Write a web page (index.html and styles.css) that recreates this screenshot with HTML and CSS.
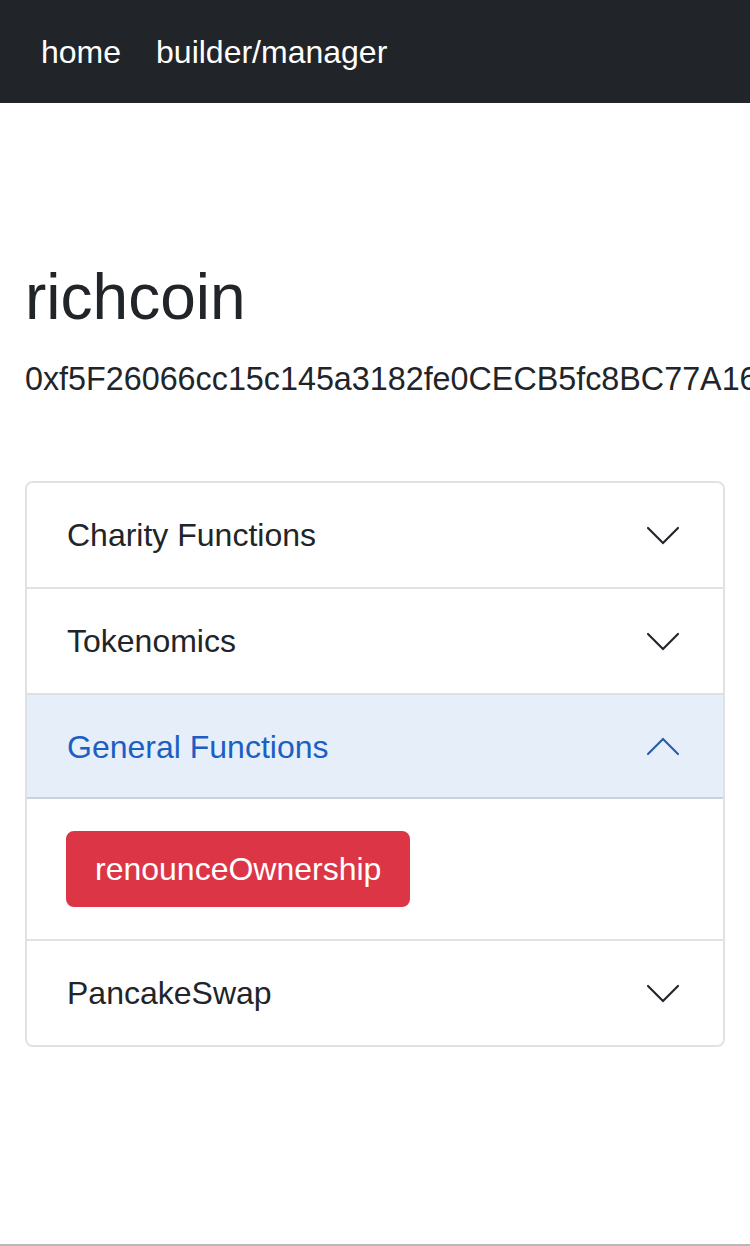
FILE: index.html
```html
<!DOCTYPE html>
<html lang="en">
<head>
<meta charset="utf-8">
<title>richcoin</title>
<link rel="stylesheet" href="styles.css">
</head>
<body>
<div class="page">
  <nav class="navbar">
    <a class="nav-link" href="#">home</a>
    <a class="nav-link" href="#">builder/manager</a>
  </nav>
  <main class="container">
    <h1 class="title">richcoin</h1>
    <p class="address">0xf5F26066cc15c145a3182fe0CECB5fc8BC77A16</p>
    <div class="accordion">
      <div class="acc-item">
        <button class="acc-btn">
          <span>Charity Functions</span>
          <svg class="chev" viewBox="0 0 16 16"><path d="M2 5.2L8 11.2L14 5.2"/></svg>
        </button>
      </div>
      <div class="acc-item">
        <button class="acc-btn">
          <span>Tokenomics</span>
          <svg class="chev" viewBox="0 0 16 16"><path d="M2 5.2L8 11.2L14 5.2"/></svg>
        </button>
      </div>
      <div class="acc-item">
        <button class="acc-btn active">
          <span>General Functions</span>
          <svg class="chev up" viewBox="0 0 16 16"><path d="M2 5.2L8 11.2L14 5.2"/></svg>
        </button>
        <div class="acc-body">
          <button class="btn-danger">renounceOwnership</button>
        </div>
      </div>
      <div class="acc-item">
        <button class="acc-btn">
          <span>PancakeSwap</span>
          <svg class="chev" viewBox="0 0 16 16"><path d="M2 5.2L8 11.2L14 5.2"/></svg>
        </button>
      </div>
    </div>
  </main>
</div>
</body>
</html>
```
FILE: styles.css
```css
* { box-sizing: border-box; }
html, body {
  margin: 0;
  padding: 0;
  overflow: hidden;
}
body {
  font-family: "Liberation Sans", Arial, sans-serif;
  font-size: 32px;
  line-height: 1.5;
  color: #212529;
  background: #fff;
}
.page {
  min-height: 100vh;
  border-bottom: 2px solid #b8b8b8;
}
.navbar {
  background: #212529;
  height: 103px;
  display: flex;
  align-items: center;
  gap: 35px;
  padding: 0 41px;
}
.nav-link {
  color: #fff;
  text-decoration: none;
  font-size: 32px;
  line-height: 48px;
}
.container {
  padding: 0 25px;
}
.title {
  margin: 156px 0 19px;
  font-size: 64px;
  font-weight: 400;
  line-height: 1.2;
}
.address {
  margin: 0 0 78px;
  white-space: nowrap;
  line-height: 48px;
  font-size: 32.3px;
}
.accordion {
  border: 2px solid #dfe1e4;
  border-radius: 8px;
  overflow: hidden;
}
.acc-item + .acc-item {
  border-top: 2px solid #dfe1e4;
}
.acc-btn {
  display: flex;
  align-items: center;
  justify-content: space-between;
  width: 100%;
  border: 0;
  background: #fff;
  font: inherit;
  color: #212529;
  text-align: left;
  padding: 28px 40px;
  line-height: 48px;
}
.acc-btn.active {
  background: #e6eefa;
  color: #1c5fc2;
  border-bottom: 2px solid #c9d3df;
  padding-bottom: 26px;
}
.chev {
  width: 40px;
  height: 40px;
  fill: none;
  stroke: #212529;
  stroke-width: 0.85;
  stroke-linecap: round;
  stroke-linejoin: miter;
  flex: none;
}
.chev.up {
  transform: rotate(180deg);
  stroke: #2a5ea8;
}
.acc-body {
  padding: 32px 40px 32px 39px;
}
.btn-danger {
  font: inherit;
  line-height: 48px;
  color: #fff;
  background: #dc3545;
  border: 2px solid #dc3545;
  border-radius: 8px;
  padding: 12px 27px;
}
```
